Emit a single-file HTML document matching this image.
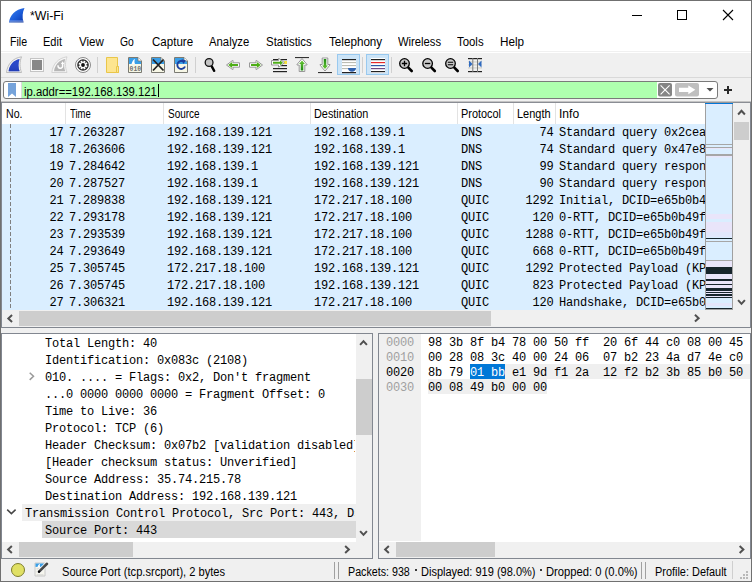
<!DOCTYPE html>
<html><head><meta charset="utf-8"><style>
html,body{margin:0;padding:0;width:752px;height:582px;overflow:hidden;background:#fff}
body{position:relative}
.u{position:absolute;font-family:"Liberation Sans", sans-serif;white-space:pre;line-height:1;transform-origin:0 0}
.m{position:absolute;font-family:"Liberation Mono", monospace;font-size:12.0px;letter-spacing:-0.2px;white-space:pre;line-height:12px;color:#000}
svg{overflow:visible}
</style></head><body>
<div style="position:absolute;left:0px;top:0px;width:752px;height:582px;background:#fff;"></div><svg style="position:absolute;left:0;top:0" width="752" height="32"><defs><linearGradient id="fin" x1="0" y1="0" x2="1" y2="1"><stop offset="0" stop-color="#3a86f4"/><stop offset="0.55" stop-color="#1a5ad8"/><stop offset="1" stop-color="#0a34a8"/></linearGradient></defs><path d="M9 22.5 C10 15 15 9.5 24.5 8 C22.5 12 22 17 23.5 22.5 Z" fill="url(#fin)"/><rect x="9.5" y="20.4" width="14" height="1.2" fill="#9ab4f0" opacity="0.6"/><rect x="9.3" y="21.6" width="14.4" height="0.9" fill="#98a0b8" opacity="0.6"/><rect x="632" y="15" width="10" height="1" fill="#000"/><rect x="677.5" y="10.5" width="9" height="9" fill="none" stroke="#000" stroke-width="1"/><path d="M723 10 L733 20 M733 10 L723 20" stroke="#000" stroke-width="1.1"/></svg><div style="position:absolute;left:1px;top:51px;width:750px;height:1px;background:#f0f0f0;"></div><div style="position:absolute;left:1px;top:53px;width:750px;height:24px;background:#f0f0f0;"></div><div style="position:absolute;left:1px;top:77px;width:750px;height:1px;background:#d9d9d9;"></div><div style="position:absolute;left:1px;top:78px;width:750px;height:23px;background:#f0f0f0;"></div><svg style="position:absolute;left:0;top:0" width="752" height="80"><defs><linearGradient id="grn" x1="0" y1="0" x2="0" y2="1"><stop offset="0" stop-color="#6cc838"/><stop offset="1" stop-color="#1e8a12"/></linearGradient><linearGradient id="finb" x1="0" y1="0" x2="0" y2="1"><stop offset="0" stop-color="#3a62e0" stop-opacity="0"/><stop offset="1" stop-color="#1c34a8" stop-opacity="0.6"/></linearGradient></defs><path d="M6.5 72.5 C7.5 64 13 58 21.5 56.8 C19.5 62 19.5 67 21.5 72.5 Z" fill="#f4f4f4" stroke="#b4b4b4" stroke-width="0.9"/><path d="M8.6 71.3 C9.5 64.5 13.8 60 19.6 59 C18.2 63.5 18.3 67.5 19.6 71.3 Z" fill="#2846c8"/><path d="M8.6 71.3 C9.5 64.5 13.8 60 19.6 59 C18.2 63.5 18.3 67.5 19.6 71.3 Z" fill="url(#finb)" /><rect x="30.5" y="58.5" width="13" height="13" fill="#fafafa" stroke="#c4c4c4"/><rect x="32" y="60" width="10" height="10" fill="#888"/><path d="M51.8 72.5 C52.8 64 58.3 58 67 56.8 C65 62 65 67 67 72.5 Z" fill="#f6f6f6" stroke="#cfcfcf" stroke-width="0.9"/><path d="M54 71.3 C55 64.5 59.3 60 65.2 59 C63.8 63.5 63.9 67.5 65.2 71.3 Z" fill="#b6b6b6"/><path d="M58.2 65.2 A2.3 2.3 0 1 0 62.6 65.6 V63.5" fill="none" stroke="#fff" stroke-width="1.5"/><path d="M60.9 64 L62.6 61.2 L64.3 64 Z" fill="#fff"/><circle cx="83" cy="65" r="7.5" fill="#fff" stroke="#8a8a8a" stroke-width="1"/><circle cx="83" cy="65" r="5.8" fill="#262626"/><g transform="translate(83,65)"><circle r="3.1" fill="#fff"/><rect x="-1" y="-4.5" width="1.9" height="1.9" fill="#fff" transform="rotate(22.5)"/><rect x="-1" y="-4.5" width="1.9" height="1.9" fill="#fff" transform="rotate(67.5)"/><rect x="-1" y="-4.5" width="1.9" height="1.9" fill="#fff" transform="rotate(112.5)"/><rect x="-1" y="-4.5" width="1.9" height="1.9" fill="#fff" transform="rotate(157.5)"/><rect x="-1" y="-4.5" width="1.9" height="1.9" fill="#fff" transform="rotate(202.5)"/><rect x="-1" y="-4.5" width="1.9" height="1.9" fill="#fff" transform="rotate(247.5)"/><rect x="-1" y="-4.5" width="1.9" height="1.9" fill="#fff" transform="rotate(292.5)"/><rect x="-1" y="-4.5" width="1.9" height="1.9" fill="#fff" transform="rotate(337.5)"/><circle r="1.9" fill="#111"/></g><rect x="97" y="57" width="1" height="16" fill="#d0d0d0"/><path d="M106.5 57.5 H117.5 V66.5 H118.5 V72.5 H106.5 Z" fill="#fde58f" stroke="#e9c64a" stroke-width="1"/><path d="M116.5 66.5 H118.5 V72.5 H116.5 Z" fill="#fde58f" stroke="#e9c64a" stroke-width="1"/><g transform="translate(128,57)"><path d="M0.5 0.5 H10 L13.5 4 V15.5 H0.5 Z" fill="#f7f7e6" stroke="#7a7a72" stroke-width="1"/><path d="M1 1 H9.8 L13 4.2 V7 H1 Z" fill="#3a9fe8"/><path d="M10 0.5 V4 H13.5" fill="#fff" stroke="#7a7a72" stroke-width="0.8"/><path d="M3.5 7 C4.5 4 5.5 2.5 7 2 C6.3 3.5 6.3 5.5 7 7 Z" fill="#fff"/><text x="1.6" y="13.6" font-family="Liberation Mono" font-size="6.4" font-weight="bold" fill="#707070">010</text></g><g transform="translate(151,57)"><path d="M0.5 0.5 H10 L13.5 4 V15.5 H0.5 Z" fill="#f7f7e6" stroke="#7a7a72" stroke-width="1"/><path d="M1 1 H9.8 L13 4.2 V7 H1 Z" fill="#3a9fe8"/><path d="M10 0.5 V4 H13.5" fill="#fff" stroke="#7a7a72" stroke-width="0.8"/><path d="M2 2.5 L12.5 13.5 M12.5 2.5 L2 13.5" stroke="#222" stroke-width="1.8"/></g><g transform="translate(174,57)"><path d="M0.5 0.5 H10 L13.5 4 V15.5 H0.5 Z" fill="#f7f7e6" stroke="#7a7a72" stroke-width="1"/><path d="M1 1 H9.8 L13 4.2 V7 H1 Z" fill="#3a9fe8"/><path d="M10 0.5 V4 H13.5" fill="#fff" stroke="#7a7a72" stroke-width="0.8"/><path d="M9.8 4.8 A4 4 0 1 0 11 9.5" fill="none" stroke="#1c3f9e" stroke-width="1.9"/><path d="M7.5 2.2 L11.8 3.2 L9.6 7 Z" fill="#1c3f9e"/></g><rect x="195" y="57" width="1" height="16" fill="#d0d0d0"/><path d="M211.6 66.2 L214.2 70.8" stroke="#000" stroke-width="2.4" stroke-linecap="round"/><circle cx="209.1" cy="62.5" r="3.9" fill="#c4c4c4" stroke="#111" stroke-width="1.3"/><g transform="translate(226,60)"><path d="M0.5 5 L6.5 0.5 L7 0.5 V2.8 H13.5 V7.2 H7 V9.5 L6.5 9.5 Z" fill="#fff" stroke="#8c8c8c" stroke-width="0.9"/><path d="M2.2 5 L6.2 2 V4 H12 V6 H6.2 V8 Z" fill="#4fae18"/></g><g transform="translate(263,60) scale(-1,1)"><path d="M0.5 5 L6.5 0.5 L7 0.5 V2.8 H13.5 V7.2 H7 V9.5 L6.5 9.5 Z" fill="#fff" stroke="#8c8c8c" stroke-width="0.9"/><path d="M2.2 5 L6.2 2 V4 H12 V6 H6.2 V8 Z" fill="#4fae18"/></g><rect x="273" y="59" width="14" height="1.2" fill="#222"/><rect x="281" y="65" width="6" height="1.2" fill="#222"/><rect x="273" y="68" width="14" height="1.2" fill="#222"/><rect x="273" y="71" width="14" height="1.2" fill="#222"/><rect x="284" y="61" width="3" height="3" fill="#f4e040"/><g transform="translate(271,58)"><path d="M0.5 2.5 H7.5 V0.5 H8 L13.5 4.7 L8 9 H7.5 V7 H0.5 Z" fill="#fff" stroke="#8c8c8c" stroke-width="0.9"/><path d="M2 3.8 H9 V2.3 L12 4.7 L9 7.3 V5.8 H2 Z" fill="#4fae18"/></g><rect x="295" y="57" width="14" height="1.1" fill="#333"/><g transform="translate(296.5,58)"><path d="M5.5 0.5 L10.5 6.5 V7 H8.3 V13.5 H2.7 V7 H0.5 V6.5 Z" fill="#fff" stroke="#8c8c8c" stroke-width="0.9"/><path d="M5.5 2.4 L8.4 5.9 H6.8 V12.4 H4.2 V5.9 H2.6 Z" fill="url(#grn)"/></g><rect x="318" y="72" width="14" height="1.1" fill="#333"/><g transform="translate(319.5,71.5) scale(1,-1)"><path d="M5.5 0.5 L10.5 6.5 V7 H8.3 V13.5 H2.7 V7 H0.5 V6.5 Z" fill="#fff" stroke="#8c8c8c" stroke-width="0.9"/><path d="M5.5 2.4 L8.4 5.9 H6.8 V12.4 H4.2 V5.9 H2.6 Z" fill="url(#grn)"/></g><rect x="337.5" y="54.5" width="22" height="20" fill="#cce4f7" stroke="#99c9ef"/><rect x="342" y="59" width="14" height="14" fill="#fff"/><rect x="342" y="59" width="14" height="1.2" fill="#222"/><rect x="342" y="62" width="14" height="1.1" fill="#bdbdb4"/><rect x="342" y="65" width="14" height="1.1" fill="#bdbdb4"/><rect x="342" y="68" width="14" height="1.1" fill="#bdbdb4"/><rect x="342" y="72" width="14" height="1.2" fill="#222"/><path d="M348 68 H356 C356 70.5 354 71.8 352 71.8 C350 71.8 348 70.5 348 68 Z" fill="#2f62b0"/><rect x="362" y="57" width="1" height="16" fill="#d0d0d0"/><rect x="366.5" y="54.5" width="22" height="20" fill="#cce4f7" stroke="#99c9ef"/><rect x="371" y="58" width="14" height="15" fill="#fff"/><rect x="371" y="59" width="14" height="1.2" fill="#222"/><rect x="371" y="62" width="14" height="1.2" fill="#e82a2a"/><rect x="371" y="65" width="14" height="1.2" fill="#2a5aa8"/><rect x="371" y="68" width="14" height="1.2" fill="#6e4a86"/><rect x="371" y="71" width="14" height="1.2" fill="#222"/><rect x="391" y="57" width="1" height="16" fill="#d0d0d0"/><path d="M408.1 67.3 L411.7 71" stroke="#000" stroke-width="2.6" stroke-linecap="round"/><circle cx="404.5" cy="63.5" r="4.8" fill="#c8c8c8" stroke="#000" stroke-width="1.3"/><path d="M401.8 63.5 H407.2 M404.5 60.8 V66.2" stroke="#000" stroke-width="1.3"/><path d="M431.20000000000005 67.3 L434.8 71" stroke="#000" stroke-width="2.6" stroke-linecap="round"/><circle cx="427.6" cy="63.5" r="4.8" fill="#c8c8c8" stroke="#000" stroke-width="1.3"/><path d="M424.9 63.5 H430.3" stroke="#000" stroke-width="1.3"/><path d="M454.1 67.3 L457.7 71" stroke="#000" stroke-width="2.6" stroke-linecap="round"/><circle cx="450.5" cy="63.5" r="4.8" fill="#c8c8c8" stroke="#000" stroke-width="1.3"/><path d="M447.8 62.3 H453.2 M447.8 64.7 H453.2" stroke="#000" stroke-width="1.1"/><rect x="468" y="58" width="14" height="1.2" fill="#222"/><rect x="468" y="71" width="14" height="1.2" fill="#222"/><rect x="468" y="61.5" width="14" height="0.9" fill="#c8c8c0"/><rect x="468" y="64.5" width="14" height="0.9" fill="#c8c8c0"/><rect x="468" y="67.5" width="14" height="0.9" fill="#c8c8c0"/><rect x="472.3" y="58" width="1" height="14" fill="#7a7a7a"/><rect x="477" y="58" width="1" height="14" fill="#7a7a7a"/><path d="M469 60.5 L472.5 64 L469 67.5 Z" fill="#2f6ac0"/><path d="M481.5 60.5 L478 64 L481.5 67.5 Z" fill="#2f6ac0"/></svg><div style="position:absolute;left:3px;top:81px;width:715px;height:18px;background:#fff;box-sizing:border-box;border:1px solid #7a7a7a;border-radius:3px"></div><div style="position:absolute;left:21px;top:82px;width:1px;height:16px;background:#dcdcdc;"></div><div style="position:absolute;left:22px;top:82px;width:635px;height:16px;background:#afffaf;"></div><svg style="position:absolute;left:0;top:78" width="752" height="23"><path d="M8 5 H16 V19 L12 15.5 L8 19 Z" fill="#76a3da"/><rect x="158" y="6" width="1" height="13" fill="#000"/><rect x="658" y="5" width="14" height="13.6" rx="2" fill="#858585"/><path d="M660.6 7.4 L669.6 16.4 M669.6 7.4 L660.6 16.4" stroke="#fff" stroke-width="1.1"/><rect x="675" y="5" width="24" height="13.6" rx="2" fill="#bfbfbf"/><path d="M679 9.8 H688.3 V7.4 L695.3 11.8 L688.3 16.2 V14 H679 Z" fill="#fff"/><path d="M706.5 10 H713.5 L710 13.5 Z" fill="#505050"/><path d="M724 12 H732 M728 8 V16" stroke="#2a2a2a" stroke-width="2"/></svg><div style="position:absolute;left:1px;top:101px;width:750px;height:1px;background:#c4c4c4;"></div><div style="position:absolute;left:1px;top:102px;width:750px;height:1px;background:#8a8d94;"></div><div style="position:absolute;left:2px;top:103px;width:703px;height:21px;background:#fff;"></div><div style="position:absolute;left:65px;top:103px;width:1px;height:21px;background:#e3e3e3;"></div><div style="position:absolute;left:163px;top:103px;width:1px;height:21px;background:#e3e3e3;"></div><div style="position:absolute;left:310px;top:103px;width:1px;height:21px;background:#e3e3e3;"></div><div style="position:absolute;left:457px;top:103px;width:1px;height:21px;background:#e3e3e3;"></div><div style="position:absolute;left:513px;top:103px;width:1px;height:21px;background:#e3e3e3;"></div><div style="position:absolute;left:555px;top:103px;width:1px;height:21px;background:#e3e3e3;"></div><div style="position:absolute;left:2px;top:124px;width:703px;height:186px;background:#daeeff;"></div><div style="position:absolute;left:2px;top:124px;width:703px;height:186px;overflow:hidden"><span class="m" style="right:641.5px;top:3.10px">17</span><span class="m" style="left:67px;top:3.10px">7.263287</span><span class="m" style="left:165px;top:3.10px">192.168.139.121</span><span class="m" style="left:312px;top:3.10px">192.168.139.1</span><span class="m" style="left:459px;top:3.10px">DNS</span><span class="m" style="right:151.5px;top:3.10px">74</span><span class="m" style="right:641.5px;top:20.10px">18</span><span class="m" style="left:67px;top:20.10px">7.263606</span><span class="m" style="left:165px;top:20.10px">192.168.139.121</span><span class="m" style="left:312px;top:20.10px">192.168.139.1</span><span class="m" style="left:459px;top:20.10px">DNS</span><span class="m" style="right:151.5px;top:20.10px">74</span><span class="m" style="right:641.5px;top:37.10px">19</span><span class="m" style="left:67px;top:37.10px">7.284642</span><span class="m" style="left:165px;top:37.10px">192.168.139.1</span><span class="m" style="left:312px;top:37.10px">192.168.139.121</span><span class="m" style="left:459px;top:37.10px">DNS</span><span class="m" style="right:151.5px;top:37.10px">99</span><span class="m" style="right:641.5px;top:54.10px">20</span><span class="m" style="left:67px;top:54.10px">7.287527</span><span class="m" style="left:165px;top:54.10px">192.168.139.1</span><span class="m" style="left:312px;top:54.10px">192.168.139.121</span><span class="m" style="left:459px;top:54.10px">DNS</span><span class="m" style="right:151.5px;top:54.10px">90</span><span class="m" style="right:641.5px;top:71.10px">21</span><span class="m" style="left:67px;top:71.10px">7.289838</span><span class="m" style="left:165px;top:71.10px">192.168.139.121</span><span class="m" style="left:312px;top:71.10px">172.217.18.100</span><span class="m" style="left:459px;top:71.10px">QUIC</span><span class="m" style="right:151.5px;top:71.10px">1292</span><span class="m" style="right:641.5px;top:88.10px">22</span><span class="m" style="left:67px;top:88.10px">7.293178</span><span class="m" style="left:165px;top:88.10px">192.168.139.121</span><span class="m" style="left:312px;top:88.10px">172.217.18.100</span><span class="m" style="left:459px;top:88.10px">QUIC</span><span class="m" style="right:151.5px;top:88.10px">120</span><span class="m" style="right:641.5px;top:105.10px">23</span><span class="m" style="left:67px;top:105.10px">7.293539</span><span class="m" style="left:165px;top:105.10px">192.168.139.121</span><span class="m" style="left:312px;top:105.10px">172.217.18.100</span><span class="m" style="left:459px;top:105.10px">QUIC</span><span class="m" style="right:151.5px;top:105.10px">1288</span><span class="m" style="right:641.5px;top:122.10px">24</span><span class="m" style="left:67px;top:122.10px">7.293649</span><span class="m" style="left:165px;top:122.10px">192.168.139.121</span><span class="m" style="left:312px;top:122.10px">172.217.18.100</span><span class="m" style="left:459px;top:122.10px">QUIC</span><span class="m" style="right:151.5px;top:122.10px">668</span><span class="m" style="right:641.5px;top:139.10px">25</span><span class="m" style="left:67px;top:139.10px">7.305745</span><span class="m" style="left:165px;top:139.10px">172.217.18.100</span><span class="m" style="left:312px;top:139.10px">192.168.139.121</span><span class="m" style="left:459px;top:139.10px">QUIC</span><span class="m" style="right:151.5px;top:139.10px">1292</span><span class="m" style="right:641.5px;top:156.10px">26</span><span class="m" style="left:67px;top:156.10px">7.305745</span><span class="m" style="left:165px;top:156.10px">172.217.18.100</span><span class="m" style="left:312px;top:156.10px">192.168.139.121</span><span class="m" style="left:459px;top:156.10px">QUIC</span><span class="m" style="right:151.5px;top:156.10px">823</span><span class="m" style="right:641.5px;top:173.10px">27</span><span class="m" style="left:67px;top:173.10px">7.306321</span><span class="m" style="left:165px;top:173.10px">192.168.139.121</span><span class="m" style="left:312px;top:173.10px">172.217.18.100</span><span class="m" style="left:459px;top:173.10px">QUIC</span><span class="m" style="right:151.5px;top:173.10px">120</span></div><div style="position:absolute;left:559px;top:124px;width:146px;height:186px;overflow:hidden"><span class="m" style="left:0px;top:3.10px">Standard query 0x2cea A www.google.com</span><span class="m" style="left:0px;top:20.10px">Standard query 0x47e8 AAAA www.google.com</span><span class="m" style="left:0px;top:37.10px">Standard query response</span><span class="m" style="left:0px;top:54.10px">Standard query response</span><span class="m" style="left:0px;top:71.10px">Initial, DCID=e65b0b49f</span><span class="m" style="left:0px;top:88.10px">0-RTT, DCID=e65b0b49f</span><span class="m" style="left:0px;top:105.10px">0-RTT, DCID=e65b0b49f</span><span class="m" style="left:0px;top:122.10px">0-RTT, DCID=e65b0b49f</span><span class="m" style="left:0px;top:139.10px">Protected Payload (KP0)</span><span class="m" style="left:0px;top:156.10px">Protected Payload (KP0)</span><span class="m" style="left:0px;top:173.10px">Handshake, DCID=e65b0b49f</span></div><svg style="position:absolute;left:0;top:124px" width="20" height="186"><path d="M10.5 0 V186" stroke="#808080" stroke-width="1" stroke-dasharray="4 2"/></svg><svg style="position:absolute;left:705px;top:102px" width="28" height="208"><rect x="0.5" y="1" width="27" height="206.5" fill="#daeeff" stroke="#a0a0a0"/><rect x="0" y="1" width="28" height="1" fill="#0078d7"/><rect x="1" y="2" width="26" height="1" fill="#ebe6fa"/><rect x="1" y="42" width="26" height="1" fill="#a6a6a6"/><rect x="1" y="45" width="26" height="1" fill="#a6a6a6"/><rect x="1" y="46" width="26" height="1" fill="#e9e5fa"/><rect x="1" y="52" width="26" height="2" fill="#a6a6a6"/><rect x="1" y="54" width="26" height="1.5" fill="#e9e5fa"/><rect x="1" y="112" width="26" height="5" fill="#e9e5fa"/><rect x="1" y="120" width="26" height="10" fill="#e9e5fa"/><rect x="1" y="130" width="26" height="5" fill="#e2e8fc"/><rect x="1" y="136" width="26" height="1" fill="#17252c"/><rect x="1" y="139" width="26" height="1" fill="#a6a6a6"/><rect x="1" y="158" width="26" height="1" fill="#a6a6a6"/><rect x="1" y="159" width="26" height="6" fill="#e9e5fa"/><rect x="1" y="165" width="26" height="7" fill="#17252c"/><rect x="1" y="172" width="26" height="5" fill="#e9e5fa"/><rect x="1" y="177" width="26" height="2" fill="#17252c"/><rect x="1" y="179" width="26" height="3" fill="#e9e5fa"/><rect x="1" y="182" width="26" height="1" fill="#17252c"/><rect x="1" y="183" width="26" height="3" fill="#e9e5fa"/><rect x="1" y="186" width="26" height="3" fill="#17252c"/><rect x="1" y="189" width="26" height="1" fill="#e9e5fa"/><rect x="1" y="190" width="26" height="1" fill="#17252c"/><rect x="1" y="191" width="26" height="1" fill="#e9e5fa"/><rect x="1" y="192" width="26" height="2" fill="#17252c"/><rect x="1" y="194" width="26" height="1" fill="#e9e5fa"/><rect x="1" y="195" width="26" height="1" fill="#17252c"/><rect x="1" y="201" width="26" height="3" fill="#e4e6fb"/><rect x="1" y="206" width="26" height="1" fill="#17252c"/></svg><div style="position:absolute;left:733px;top:103px;width:18px;height:207px;background:#f0f0f0;"></div><div style="position:absolute;left:734px;top:122px;width:15px;height:18px;background:#cdcdcd;"></div><div style="position:absolute;left:2px;top:310px;width:749px;height:17px;background:#f0f0f0;"></div><div style="position:absolute;left:19px;top:311px;width:472px;height:15px;background:#cdcdcd;"></div><div style="position:absolute;left:1px;top:327px;width:750px;height:1px;background:#828790;"></div><div style="position:absolute;left:1px;top:102px;width:1px;height:226px;background:#828790;"></div><div style="position:absolute;left:750px;top:102px;width:1px;height:226px;background:#828790;"></div><div style="position:absolute;left:1px;top:328px;width:750px;height:5px;background:#f0f0f0;"></div><div style="position:absolute;left:1px;top:333px;width:372px;height:226px;background:#fff;box-sizing:border-box;border:1px solid #828790"></div><div style="position:absolute;left:373px;top:333px;width:5px;height:226px;background:#f0f0f0;"></div><div style="position:absolute;left:356px;top:334px;width:16px;height:224px;background:#f0f0f0;"></div><div style="position:absolute;left:356px;top:379px;width:16px;height:56px;background:#cdcdcd;"></div><div style="position:absolute;left:2px;top:542px;width:354px;height:16px;background:#f0f0f0;"></div><div style="position:absolute;left:19px;top:542px;width:114px;height:15px;background:#cdcdcd;"></div><div style="position:absolute;left:378px;top:333px;width:373px;height:226px;background:#fff;box-sizing:border-box;border:1px solid #828790"></div><div style="position:absolute;left:379px;top:334px;width:42px;height:207px;background:#f0f0f0;"></div><div style="position:absolute;left:379px;top:542px;width:371px;height:16px;background:#f0f0f0;"></div><div style="position:absolute;left:396px;top:542px;width:99px;height:15px;background:#cdcdcd;"></div><div style="position:absolute;left:1px;top:559px;width:750px;height:22px;background:#f0f0f0;"></div><div style="position:absolute;left:22px;top:504px;width:334px;height:17px;background:#efefef;"></div><div style="position:absolute;left:42px;top:521px;width:314px;height:17px;background:#d9d9d9;"></div><div style="position:absolute;left:2px;top:334px;width:353px;height:207px;overflow:hidden"><span class="m" style="left:43px;top:4.10px">Total Length: 40</span><span class="m" style="left:43px;top:21.10px">Identification: 0x083c (2108)</span><span class="m" style="left:43px;top:38.10px">010. .... = Flags: 0x2, Don't fragment</span><span class="m" style="left:43px;top:55.10px">...0 0000 0000 0000 = Fragment Offset: 0</span><span class="m" style="left:43px;top:72.10px">Time to Live: 36</span><span class="m" style="left:43px;top:89.10px">Protocol: TCP (6)</span><span class="m" style="left:43px;top:106.10px">Header Checksum: 0x07b2 [validation disabled]</span><span class="m" style="left:43px;top:123.10px">[Header checksum status: Unverified]</span><span class="m" style="left:43px;top:140.10px">Source Address: 35.74.215.78</span><span class="m" style="left:43px;top:157.10px">Destination Address: 192.168.139.121</span><span class="m" style="left:23px;top:174.10px">Transmission Control Protocol, Src Port: 443, Dst Port: 54642, Seq: 1, Ack: 1, Len: 0</span><span class="m" style="left:43px;top:191.10px">Source Port: 443</span></div><div style="position:absolute;left:505px;top:364px;width:245px;height:15px;background:#efefef;"></div><div style="position:absolute;left:428px;top:379px;width:119px;height:15px;background:#efefef;"></div><div style="position:absolute;left:470px;top:364px;width:35px;height:15px;background:#0078d7;"></div><div style="position:absolute;left:379px;top:334px;width:371px;height:207px;overflow:hidden"><span class="m" style="left:7px;top:3.10px;color:#a0a0a0">0000</span><span class="m" style="left:49px;top:3.10px">98 3b 8f b4 78 00 50 ff  20 6f 44 c0 08 00 45 00</span><span class="m" style="left:7px;top:18.10px;color:#a0a0a0">0010</span><span class="m" style="left:49px;top:18.10px">00 28 08 3c 40 00 24 06  07 b2 23 4a d7 4e c0 a8</span><span class="m" style="left:7px;top:33.10px;color:#000">0020</span><span class="m" style="left:49px;top:33.10px">8b 79 </span><span class="m" style="left:91px;top:33.10px;color:#fff">01 bb</span><span class="m" style="left:126px;top:33.10px"> e1 9d f1 2a  12 f2 b2 3b 85 b0 50 10</span><span class="m" style="left:7px;top:48.10px;color:#a0a0a0">0030</span><span class="m" style="left:49px;top:48.10px">00 08 49 b0 00 00</span></div><svg style="position:absolute;left:0;top:0" width="752" height="582"><path d="M738.1 114.44999999999999 L741.5 110.75 L744.9 114.44999999999999" fill="none" stroke="#505050" stroke-width="2"/><path d="M738.1 300.15 L741.5 303.85 L744.9 300.15" fill="none" stroke="#505050" stroke-width="2"/><path d="M12.049999999999999 315.1 L8.35 318.5 L12.049999999999999 321.9" fill="none" stroke="#505050" stroke-width="2"/><path d="M694.9499999999999 314.8 L698.65 318.2 L694.9499999999999 321.59999999999997" fill="none" stroke="#505050" stroke-width="2"/><path d="M360.1 344.85 L363.5 341.15 L366.9 344.85" fill="none" stroke="#505050" stroke-width="2"/><path d="M360.1 531.15 L363.5 534.85 L366.9 531.15" fill="none" stroke="#505050" stroke-width="2"/><path d="M11.85 546.1 L8.15 549.5 L11.85 552.9" fill="none" stroke="#505050" stroke-width="2"/><path d="M345.15 546.1 L348.85 549.5 L345.15 552.9" fill="none" stroke="#505050" stroke-width="2"/><path d="M388.85 546.1 L385.15 549.5 L388.85 552.9" fill="none" stroke="#505050" stroke-width="2"/><path d="M739.65 546.1 L743.35 549.5 L739.65 552.9" fill="none" stroke="#505050" stroke-width="2"/><path d="M29.700000000000003 372.7 L33.5 376.3 L29.700000000000003 379.90000000000003" fill="none" stroke="#9a9a9a" stroke-width="1.5"/><path d="M7.2 509.6 L11.4 513.6 L15.600000000000001 509.6" fill="none" stroke="#484848" stroke-width="1.5"/><circle cx="18" cy="570" r="6.5" fill="#e0e064" stroke="#7d7d2e" stroke-width="1"/><g transform="translate(34.5,562.5)"><path d="M0.5 0.5 H10.5 V13.5 H0.5 Z" fill="#f6f6ee" stroke="#c4c4c4" stroke-width="0.9"/><rect x="1" y="1" width="8.3" height="3.4" fill="#3a9fe8"/><path d="M3 4.4 C3.6 2.6 4.4 1.6 5.6 1.2 C5.1 2.3 5.1 3.4 5.6 4.4 Z" fill="#fff"/><rect x="2" y="6" width="4" height="0.8" fill="#cacaca"/><rect x="2" y="9" width="3" height="0.8" fill="#cacaca"/><rect x="2" y="12" width="7" height="0.8" fill="#cacaca"/></g><path d="M39.2 571.5 L47 563.8" stroke="#f4f4f4" stroke-width="4.2" stroke-linecap="round"/><path d="M39.6 571.1 L47 563.8" stroke="#484848" stroke-width="2.6" stroke-linecap="round"/><circle cx="39" cy="571.8" r="1.2" fill="#000"/><rect x="415" y="569" width="2" height="2" fill="#3a3a3a"/><rect x="540" y="569" width="2" height="2" fill="#3a3a3a"/><rect x="334" y="562" width="1" height="17" fill="#a0a0a0"/><rect x="338" y="562" width="1" height="17" fill="#a0a0a0"/><rect x="641" y="562" width="1" height="17" fill="#a0a0a0"/><rect x="645" y="562" width="1" height="17" fill="#a0a0a0"/><rect x="732" y="561" width="1" height="18" fill="#cfcfcf"/><rect x="746" y="571" width="2" height="2" fill="#b8b8b8"/><rect x="743" y="574" width="2" height="2" fill="#b8b8b8"/><rect x="746" y="574" width="2" height="2" fill="#b8b8b8"/><rect x="740" y="577" width="2" height="2" fill="#b8b8b8"/><rect x="743" y="577" width="2" height="2" fill="#b8b8b8"/><rect x="746" y="577" width="2" height="2" fill="#b8b8b8"/></svg><span class="u" style="left:30.00px;top:10.04px;font-size:12px;color:#000;transform:scaleX(1.0285)">*Wi-Fi</span><span class="u" style="left:9.60px;top:36.04px;font-size:12px;color:#000;transform:scaleX(0.8850)">File</span><span class="u" style="left:43.10px;top:36.04px;font-size:12px;color:#000;transform:scaleX(0.9183)">Edit</span><span class="u" style="left:79.00px;top:36.04px;font-size:12px;color:#000;transform:scaleX(0.9607)">View</span><span class="u" style="left:120.40px;top:36.04px;font-size:12px;color:#000;transform:scaleX(0.8632)">Go</span><span class="u" style="left:151.50px;top:36.04px;font-size:12px;color:#000;transform:scaleX(0.9624)">Capture</span><span class="u" style="left:209.40px;top:36.04px;font-size:12px;color:#000;transform:scaleX(0.9438)">Analyze</span><span class="u" style="left:266.00px;top:36.04px;font-size:12px;color:#000;transform:scaleX(0.9539)">Statistics</span><span class="u" style="left:328.50px;top:36.04px;font-size:12px;color:#000;transform:scaleX(0.9724)">Telephony</span><span class="u" style="left:397.90px;top:36.04px;font-size:12px;color:#000;transform:scaleX(0.9369)">Wireless</span><span class="u" style="left:457.00px;top:36.04px;font-size:12px;color:#000;transform:scaleX(0.9495)">Tools</span><span class="u" style="left:500.30px;top:36.04px;font-size:12px;color:#000;transform:scaleX(0.9758)">Help</span><span class="u" style="left:5.50px;top:108.04px;font-size:12px;color:#000;transform:scaleX(0.8833)">No.</span><span class="u" style="left:69.70px;top:108.04px;font-size:12px;color:#000;transform:scaleX(0.7911)">Time</span><span class="u" style="left:168.00px;top:108.04px;font-size:12px;color:#000;transform:scaleX(0.8319)">Source</span><span class="u" style="left:314.40px;top:108.04px;font-size:12px;color:#000;transform:scaleX(0.9063)">Destination</span><span class="u" style="left:461.20px;top:108.04px;font-size:12px;color:#000;transform:scaleX(0.9065)">Protocol</span><span class="u" style="left:517.30px;top:108.04px;font-size:12px;color:#000;transform:scaleX(0.9159)">Length</span><span class="u" style="left:558.60px;top:108.04px;font-size:12px;color:#000;transform:scaleX(1.0030)">Info</span><span class="u" style="left:24.40px;top:86.04px;font-size:12px;color:#000;transform:scaleX(0.9439)">ip.addr==192.168.139.121</span><span class="u" style="left:62.20px;top:565.54px;font-size:12px;color:#000;transform:scaleX(0.9264)">Source Port (tcp.srcport), 2 bytes</span><span class="u" style="left:348.40px;top:565.54px;font-size:12px;color:#000;transform:scaleX(0.8909)">Packets: 938</span><span class="u" style="left:420.50px;top:565.54px;font-size:12px;color:#000;transform:scaleX(0.9179)">Displayed: 919 (98.0%)</span><span class="u" style="left:545.60px;top:565.54px;font-size:12px;color:#000;transform:scaleX(0.9342)">Dropped: 0 (0.0%)</span><span class="u" style="left:655.10px;top:565.54px;font-size:12px;color:#000;transform:scaleX(0.9097)">Profile: Default</span><div style="position:absolute;left:0;top:0;width:752px;height:582px;box-sizing:border-box;border:1px solid #707070"></div>
</body></html>
